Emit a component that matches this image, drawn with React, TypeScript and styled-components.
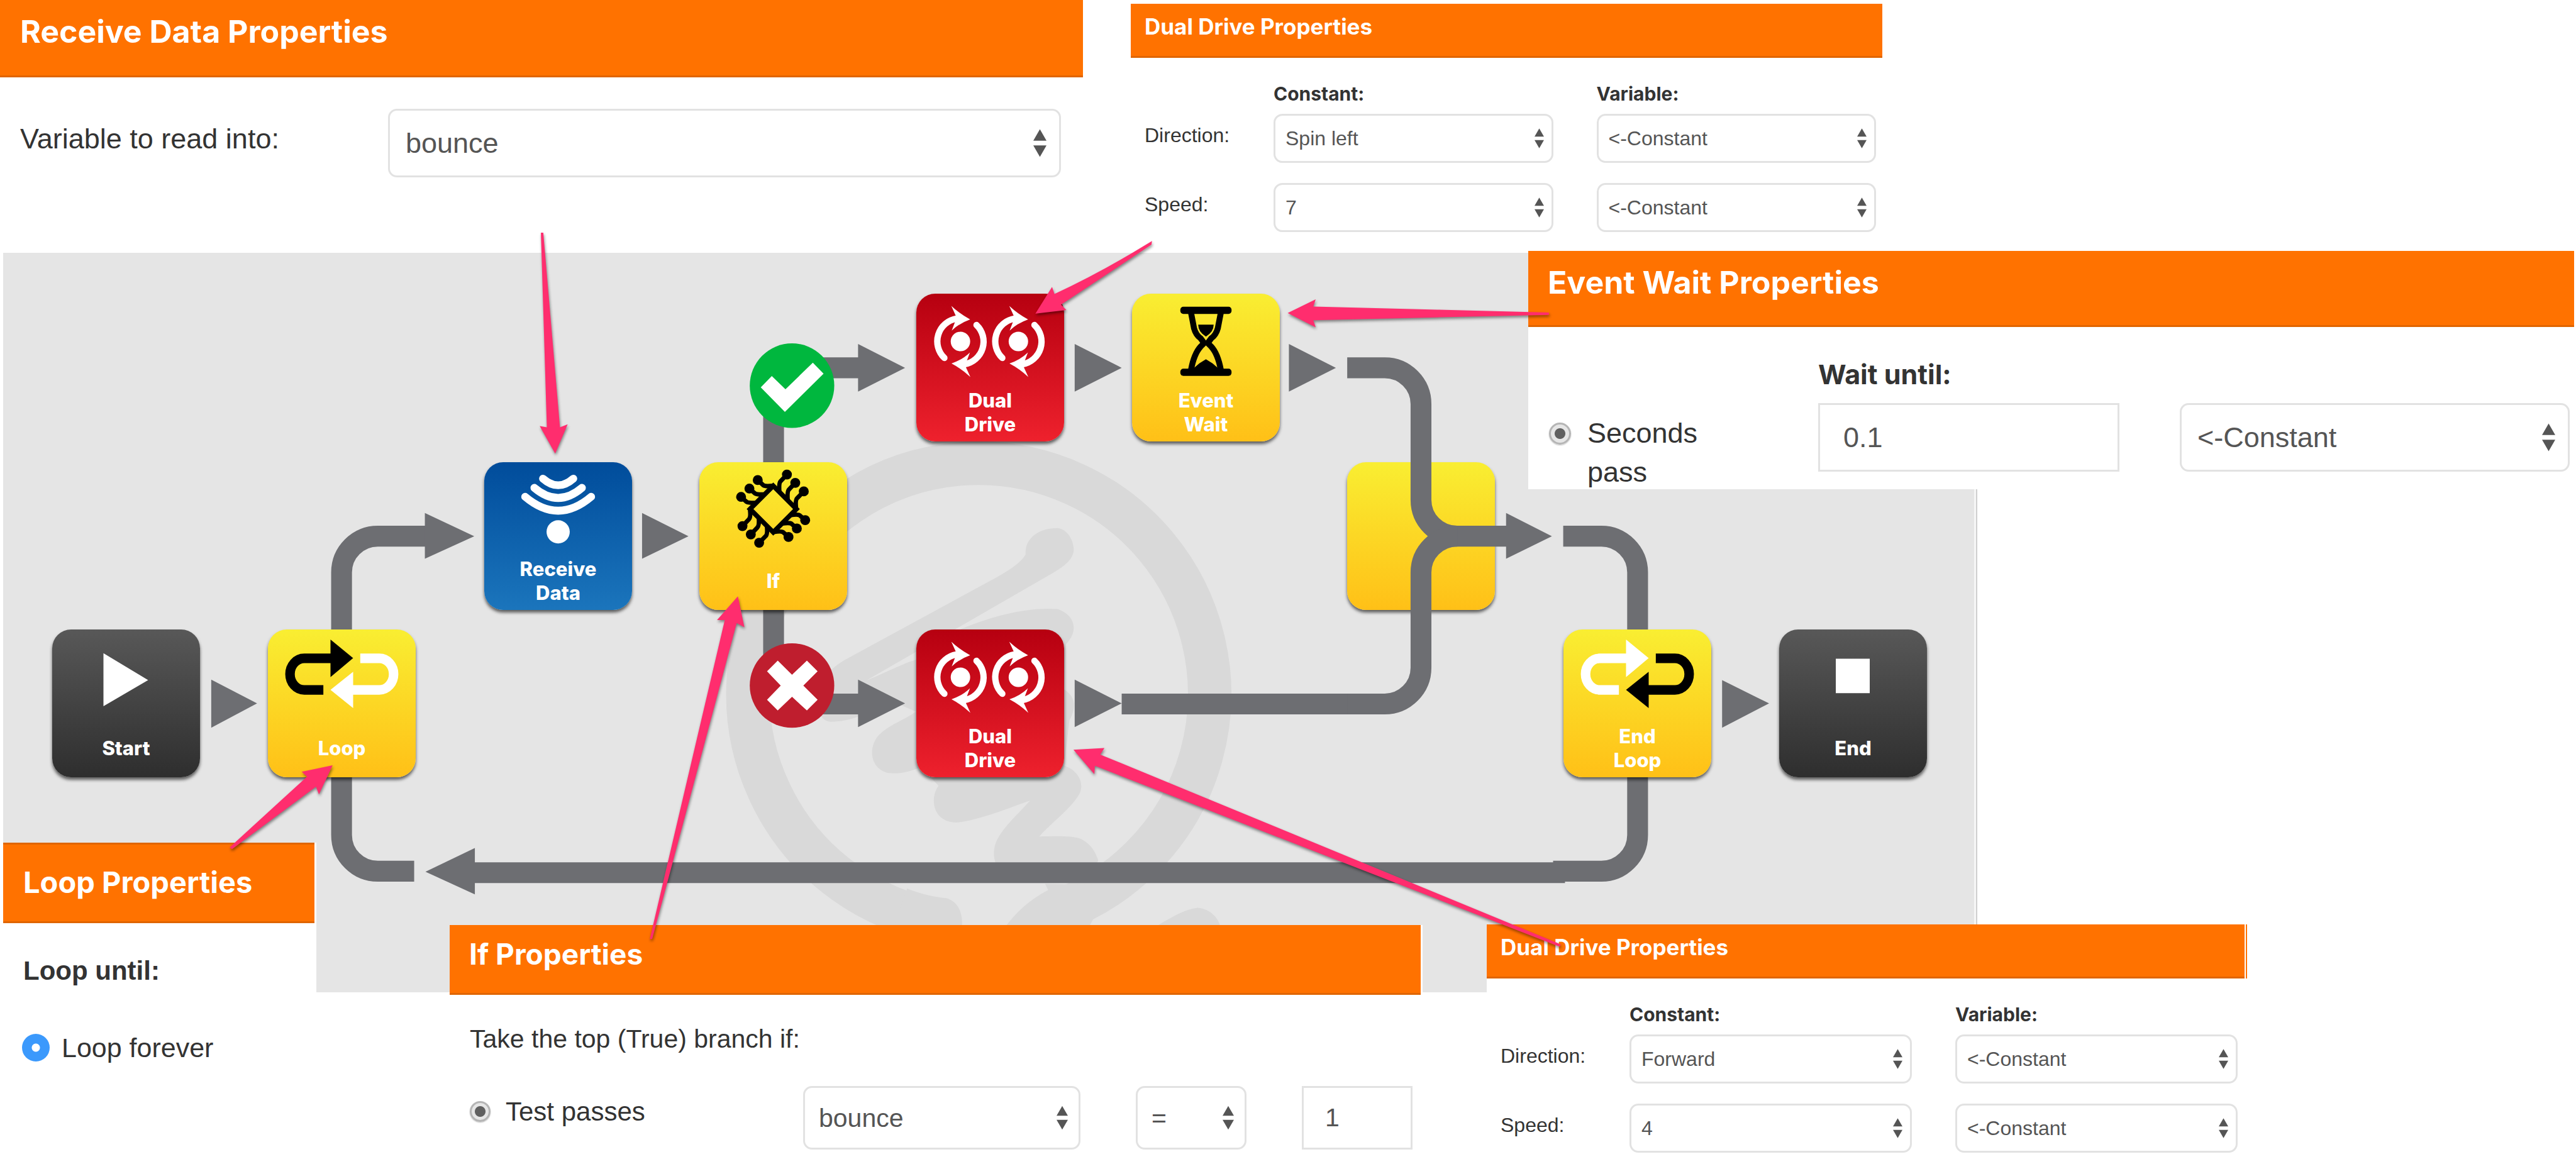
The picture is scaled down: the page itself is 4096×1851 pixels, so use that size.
import React, { useId } from "react";
import styled, { createGlobalStyle, css } from "styled-components";

const GlobalStyle = createGlobalStyle`
  *, *::before, *::after { box-sizing: border-box; }
  body {
    margin: 0;
    background: #fff;
    color: #333;
    font-family: "Liberation Sans", Arial, Helvetica, sans-serif;
  }
`;

const displayFont = `Inter, Roboto, "Liberation Sans", sans-serif`;
const orange = "#ff7200";
const orangeEdge = "#e06500";

/* ---------- board ---------- */

const Board = styled.main`
  position: relative;
  width: 100%;
  min-height: 100vh;
  overflow: hidden;
`;

const Canvas = styled.section`
  position: absolute;
  left: 5px;
  top: 402px;
  width: 3134px;
  height: 1176px;
  background: #e5e5e5;
  box-shadow: 3px 0 0 #f6f6f6, 5px 0 0 #cfcfcf;
`;

const Layer = styled.svg`
  position: absolute;
  left: 0;
  top: 0;
  width: 4096px;
  height: 1851px;
  pointer-events: none;
`;

/* ---------- flow chart tiles ---------- */

type Tone = "dark" | "yellow" | "blue" | "red";

const tones: Record<Tone, string> = {
  dark: "linear-gradient(#585858, #2e2e2e)",
  yellow: "linear-gradient(#f9ee32, #ffc017)",
  blue: "linear-gradient(#004c9b, #1b75bc)",
  red: "linear-gradient(#b60010, #ee212d)",
};

const Tile = styled.div<{ $x: number; $y: number; $tone: Tone }>`
  position: absolute;
  left: ${(p) => p.$x}px;
  top: ${(p) => p.$y}px;
  width: 235px;
  height: 235px;
  display: flex;
  flex-direction: column;
  border-radius: 30px;
  background: ${(p) => tones[p.$tone]};
  box-shadow: 0 4px 5px rgba(0, 0, 0, 0.6);
`;

const TileIcon = styled.svg`
  display: block;
  width: 235px;
  height: 142px;
`;

const TileLabel = styled.div`
  flex: 1;
  display: flex;
  align-items: center;
  justify-content: center;
  padding: 0 54px;
  color: #fff;
  font: 800 31px/38px ${displayFont};
  text-align: center;
`;

const PlayIcon = () => <path d="M86 40 161 85 86 129Z" fill="#fff" />;
const StopIcon = () => <path d="M95 49H152V107H95Z" fill="#fff" />;

const LoopIcon = ({ first, second }: { first: string; second: string }) => (
  <>
    <path d="M93 101.5H61A24 26.5 0 0 1 61 48.5H106" fill="none" stroke={first} strokeWidth="16" />
    <path d="M105 17 143 48 105 80Z" fill={first} />
    <path d="M155 48.5H187A24 26.5 0 0 1 187 101.5H142" fill="none" stroke={second} strokeWidth="16" />
    <path d="M105 101.5 143 71V132Z" fill={second} />
  </>
);

const SignalIcon = () => (
  <>
    <g fill="none" stroke="#fff" strokeWidth="13" strokeLinecap="round">
      <path d="M98.500 27.500Q124 50 149.500 27.500" />
      <path d="M84 43Q124 77 164 43" />
      <path d="M68.500 58Q124 105 179.500 58" />
    </g>
    <circle cx="124" cy="117" r="19.500" fill="#fff" />
  </>
);

const chipPads: [number, number][] = [
  [459, 83], [501, 125], [544, 168], [312, 111], [270, 154], [228, 196],
  [235, 343], [277, 385], [319, 427], [467, 398], [509, 355], [551, 313],
];

const ChipIcon = () => (
  <g transform="translate(-6 -7) scale(.3333)">
    <path d="M273 257 390 140 507 257 390 374Z" fill="none" stroke="#000" strokeWidth="24" />
    <path
      fill="none"
      stroke="#000"
      strokeWidth="22"
      strokeLinejoin="round"
      d="M459 83 426 118Q418 128 421 168M501 125 468 160Q460 170 463 212M544 168 510 203Q501 212 505 252
         M312 111 340 137Q350 144 388 140M270 154 298 178Q308 185 346 183M228 196 256 221Q266 227 304 226
         M235 343 268 308Q277 299 273 262M277 385 310 350Q320 340 317 302M319 427 353 392Q362 382 358 344
         M467 398 440 374Q430 367 392 373M509 355 482 331Q472 325 434 330M551 313 522 288Q512 283 476 288"
    />
    {chipPads.map(([x, y]) => (
      <circle key={`${x}-${y}`} cx={x} cy={y} r="25" />
    ))}
  </g>
);

const Wheel = ({ dx }: { dx: number }) => (
  <g transform={`translate(${dx} 0)`}>
    <circle cx="252" cy="283" r="49" fill="#fff" />
    <g fill="none" stroke="#fff" strokeWidth="32" strokeLinecap="round">
      <path d="M171 366A116 116 0 0 1 232 168" />
      <path d="M333 200A116 116 0 0 1 272 398" />
    </g>
    <path d="M206 104Q250 145 301 172 245 192 208 228L224 186 228 152Z" fill="#fff" />
    <path d="M302 462Q258 421 207 394 263 374 300 338L284 380 280 414Z" fill="#fff" />
  </g>
);

const DriveIcon = () => (
  <g transform="translate(-10 -14) scale(.3333)">
    <Wheel dx={0} />
    <Wheel dx={292} />
  </g>
);

const HourglassIcon = () => (
  <>
    <rect x="81" y="22" width="86" height="12" rx="5" />
    <rect x="81" y="126" width="86" height="12" rx="5" />
    <g fill="none" stroke="#000" strokeWidth="10">
      <path d="M99 32 104 58Q107 69 115 75L121 83 115 89Q104 101 99 128" />
      <path d="M149 32 144 58Q141 69 133 75L127 83 133 89Q144 101 149 128" />
    </g>
    <path d="M111 52H137Q137 64 124 72 111 64 111 52Z" />
    <path d="M100 128 113 117 124 110 135 117 148 128Z" />
  </>
);

type Step = { x: number; y: number; tone: Tone; label: string; icon?: React.ReactNode };

const steps: Step[] = [
  { x: 83, y: 1001, tone: "dark", label: "Start", icon: <PlayIcon /> },
  { x: 426, y: 1001, tone: "yellow", label: "Loop", icon: <LoopIcon first="#000" second="#fff" /> },
  { x: 770, y: 735, tone: "blue", label: "Receive Data", icon: <SignalIcon /> },
  { x: 1112, y: 735, tone: "yellow", label: "If", icon: <ChipIcon /> },
  { x: 1457, y: 467, tone: "red", label: "Dual Drive", icon: <DriveIcon /> },
  { x: 1457, y: 1001, tone: "red", label: "Dual Drive", icon: <DriveIcon /> },
  { x: 1800, y: 467, tone: "yellow", label: "Event Wait", icon: <HourglassIcon /> },
  { x: 2142, y: 735, tone: "yellow", label: "" },
  { x: 2486, y: 1001, tone: "yellow", label: "End Loop", icon: <LoopIcon first="#fff" second="#000" /> },
  { x: 2829, y: 1001, tone: "dark", label: "End", icon: <StopIcon /> },
];

const FlowStep = ({ x, y, tone, label, icon }: Step) => (
  <Tile $x={x} $y={y} $tone={tone}>
    {icon && <TileIcon viewBox="0 0 248 150" aria-hidden="true">{icon}</TileIcon>}
    {label && <TileLabel>{label}</TileLabel>}
  </Tile>
);

const grey = "#6d6e72";

const Watermark = () => (
  <g fill="#d9d9d9">
    <path
      d="M1580 1549A388 388 0 1 1 1772 1533"
      fill="none"
      stroke="#d9d9d9"
      strokeWidth="73"
    />
    <g transform="translate(1180 740) scale(.574 .523)">
      <path d="M600 1440C650 1462 690 1468 715 1471 750 1482 765 1520 760 1568H560Z" />
      <path d="M1004 1425 1013 1445C960 1475 915 1520 885 1568H1130L1200 1430Z" />
      <path d="M1320 1568C1370 1535 1410 1508 1450 1502 1490 1505 1515 1540 1518 1568Z" />
      <path
        d="M947 366C944 315 985 282 1040 282 1072 286 1088 325 1088 352 1086 392 1040 418 1000 443
           L480 772C560 735 590 715 640 700L760 605C860 560 960 535 1040 542 1090 560 1105 610 1065 655
           L1060 800C1095 825 1095 860 1075 900L1060 1045C1100 1060 1120 1100 1105 1135
           1080 1185 1020 1230 987 1273 1040 1272 1085 1270 1110 1281 1140 1300 1150 1320 1160 1350
           L1130 1400H900C850 1380 845 1320 865 1280 885 1240 925 1200 960 1158
           900 1180 810 1222 745 1228 675 1228 665 1150 692 1110L640 1050
           C600 1068 575 1072 545 1069 490 1055 485 985 518 946 550 912 590 900 626 872
           L560 840C480 880 430 905 375 904 330 900 330 820 370 750 385 725 410 710 430 698
           L820 465C880 430 930 400 947 366Z"
      />
    </g>
  </g>
);

const Connectors = () => (
  <>
    <g fill="none" stroke={grey} strokeWidth="35">
      <path d="M574 1070V962A61 61 0 0 1 635 901H716" />
      <path d="M574 1300V1403A61 61 0 0 0 635 1464H696" />
      <path d="M1300 790V679A61 61 0 0 1 1361 618H1444" />
      <path d="M1300 1010V1122A61 61 0 0 0 1361 1183H1444" />
      <path d="M1885 1183H2270" />
      <path d="M797 1466.500H2630" />
      <path d="M2610 1464H2691A61 61 0 0 0 2752 1403V1300" />
      <path d="M2627 901H2691A61 61 0 0 1 2752 962V1070" />
    </g>
    <g fill={grey}>
      <path d="M355 1142 432 1182 355 1223Z" />
      <path d="M714 862 797 901 714 939Z" />
      <path d="M1079 862 1157 901 1079 939Z" />
      <path d="M1442 578 1521 618 1442 658Z" />
      <path d="M1442 1142 1521 1182 1442 1222Z" />
      <path d="M1806 578 1885 618 1806 658Z" />
      <path d="M1806 1142 1885 1182 1806 1222Z" />
      <path d="M2166 578 2245 618 2166 658Z" />
      <path d="M2894 1143 2973 1182 2894 1223Z" />
      <path d="M715 1465 798 1425V1503Z" />
    </g>
  </>
);

const MergeConnector = () => (
  <>
    <g fill="none" stroke={grey} strokeWidth="35">
      <path d="M2264 618H2327A61 61 0 0 1 2388 679V840A61 61 0 0 0 2449 901H2532" />
      <path d="M2264 1183H2327A61 61 0 0 0 2388 1122V962A61 61 0 0 1 2449 901" />
    </g>
    <path d="M2531 862 2608 901 2531 939Z" fill={grey} />
  </>
);

const Badges = () => (
  <>
    <circle cx="1331" cy="648" r="71" fill="#00b73e" />
    <path d="M1278.500 651 1297 632 1320 654 1366 609.500 1384 628 1319 692Z" fill="#fff" />
    <circle cx="1331" cy="1152" r="71" fill="#bf1e2e" />
    <path
      d="M1307 1110 1331 1134 1356 1110 1374 1128 1350 1152 1374 1176 1356 1194 1331 1171 1307 1194 1289 1176 1312 1152 1289 1128Z"
      fill="#fff"
    />
  </>
);

const PointerGroup = styled.g`
  fill: #ff2d6e;
  filter: drop-shadow(1px 3px 2px rgba(0, 0, 0, 0.45));
`;

const Pointers = () => (
  <PointerGroup>
    <path d="M909 391 913 391 941 718 954 713 933 762 907 716 919 718Z" />
    <path d="M1936 405 1935 411 1783 512 1792 521 1740 527 1768 482 1772 494Q1850 458 1936 405Z" />
    <path d="M2603 525V529L2207 538 2211 550 2164 526 2211 503 2207 515Z" />
    <path d="M1092 1578 1096 1578 1238 1047 1251 1054 1240 1002 1205 1042 1218 1042Z" />
    <path d="M2621 1591 2623 1587 1849 1268 1856 1257 1804 1260 1839 1301 1840 1287Z" />
    <path d="M386 1424 390 1427 531 1322 536 1335 559 1286 507 1297 516 1305Z" />
  </PointerGroup>
);

/* ---------- property panels ---------- */

const Panel = styled.section<{ $x: number; $y: number; $w: number; $h: number }>`
  position: absolute;
  left: ${(p) => p.$x}px;
  top: ${(p) => p.$y}px;
  width: ${(p) => p.$w}px;
  height: ${(p) => p.$h}px;
  overflow: hidden;
  background: #fff;
`;

const PanelTitle = styled.h2<{
  $size: number;
  $height: number;
  $pad: number;
  $inset: number;
  $topEdge?: boolean;
  $sideEdge?: boolean;
}>`
  margin: 0 ${(p) => (p.$sideEdge ? 4 : 3)}px 0 0;
  height: ${(p) => p.$height}px;
  padding: ${(p) => p.$pad}px ${(p) => p.$inset}px 0;
  background: ${orange};
  border-bottom: 3px solid ${orangeEdge};
  color: #fff;
  font: 700 ${(p) => p.$size}px/60px ${displayFont};
  white-space: nowrap;
  ${(p) =>
    p.$topEdge &&
    css`
      box-shadow: inset 0 3px 0 ${orangeEdge};
    `}
  ${(p) =>
    p.$sideEdge &&
    css`
      box-shadow: 2px 0 0 #fff, 4px 0 0 ${orange};
    `}
`;

const fieldBox = css<{ $size: number; $pad: number }>`
  display: block;
  width: 100%;
  height: 100%;
  margin: 0;
  padding: 0 ${(p) => p.$pad}px;
  border: 3px solid #e2e2e2;
  background: #fff;
  color: #555;
  font: 400 ${(p) => p.$size}px "Liberation Sans", Arial, Helvetica, sans-serif;
  outline: none;
`;

const SelectWrap = styled.div<{ $height: number }>`
  position: relative;
  height: ${(p) => p.$height}px;
`;

const SelectBox = styled.select<{ $size: number; $pad: number }>`
  ${fieldBox}
  appearance: none;
  border-radius: 14px;
`;

const TextBox = styled.input<{ $size: number; $pad: number; $height: number }>`
  ${fieldBox}
  height: ${(p) => p.$height}px;
  border-radius: 0;
`;

const Carets = styled.svg<{ $w: number; $right: number }>`
  position: absolute;
  top: 0;
  bottom: 0;
  right: ${(p) => p.$right}px;
  width: ${(p) => p.$w}px;
  height: 100%;
  pointer-events: none;
`;

type Scale = "small" | "medium" | "large";
const scales = {
  small: { size: 32, height: 78, pad: 16, caret: 15, right: 15 },
  medium: { size: 41, height: 101, pad: 22, caret: 18, right: 20 },
  large: { size: 45, height: 109, pad: 25, caret: 21, right: 23 },
};

const Select = ({ value, scale, id, label }: { value: string; scale: Scale; id?: string; label?: string }) => {
  const s = scales[scale];
  return (
    <SelectWrap $height={s.height}>
      <SelectBox id={id} aria-label={label} defaultValue={value} $size={s.size} $pad={s.pad}>
        <option>{value}</option>
      </SelectBox>
      <Carets viewBox="0 0 22 46" $w={s.caret} $right={s.right} aria-hidden="true">
        <path d="M11 0 22 19H0ZM0 27H22L11 46Z" fill="#555" />
      </Carets>
    </SelectWrap>
  );
};

const FieldLabel = styled.label<{ $size: number; $lift: number }>`
  align-self: center;
  padding-bottom: ${(p) => p.$lift}px;
  font-size: ${(p) => p.$size}px;
  white-space: nowrap;
`;

const ColumnHead = styled.div<{ $size: number; $line: number }>`
  font: 700 ${(p) => p.$size}px/${(p) => p.$line}px ${displayFont};
`;

const Radio = styled.input<{ $size: number; $blue?: boolean }>`
  appearance: none;
  flex: none;
  width: ${(p) => p.$size}px;
  height: ${(p) => p.$size}px;
  margin: 0;
  border-radius: 50%;
  ${(p) =>
    p.$blue
      ? css`
          background: radial-gradient(circle, #fff 6px, #3b99fc 7px);
        `
      : css`
          border: 3px solid #b5b5b5;
          background: radial-gradient(circle, #606060 8px, #e6e6e6 9px);
          box-shadow: 0 1px 2px rgba(0, 0, 0, 0.25);
        `}
`;

const RadioRow = styled.label<{ $size: number; $line: number; $gap: number }>`
  display: flex;
  align-items: center;
  gap: ${(p) => p.$gap}px;
  font-size: ${(p) => p.$size}px;
  line-height: ${(p) => p.$line}px;
`;

const ReceiveBody = styled.div`
  display: grid;
  grid-template-columns: 585px 1fr;
  padding: 50px 38px 0 32px;
`;

const DriveBody = styled.div<{ $right: number }>`
  display: grid;
  grid-template-columns: 136px 1fr 1fr;
  column-gap: 69px;
  row-gap: 32px;
  padding: 37px ${(p) => p.$right}px 0 22px;
`;

const DriveHeads = styled.div`
  grid-column: 2 / -1;
  display: grid;
  grid-template-columns: 1fr 1fr;
  column-gap: 69px;
  margin-bottom: -20px;
`;

const EventBody = styled.div`
  display: grid;
  grid-template-columns: 332px 479px 1fr;
  column-gap: 96px;
  row-gap: 16px;
  padding: 45px 10px 0 33px;
`;

const EventHead = styled(ColumnHead)`
  grid-column: 2 / -1;
`;

const EventRadio = styled(RadioRow)`
  align-items: flex-start;
  padding-top: 17px;
  padding-right: 60px;

  input {
    margin-top: 14px;
  }
`;

const LoopBody = styled.div`
  display: flex;
  flex-direction: column;
  gap: 62px;
  padding: 46px 31px 0 30px;
`;

const LoopHead = styled.div`
  padding-left: 2px;
  font-size: 42px;
  font-weight: 700;
  line-height: 60px;
`;

const IfBody = styled.div`
  padding: 40px 16px 0 32px;
`;

const IfText = styled.p`
  margin: 0 0 45px;
  font-size: 41px;
  line-height: 60px;
`;

const IfRow = styled.div`
  display: grid;
  grid-template-columns: 442px 441px 1fr 1fr;
  column-gap: 88px;
`;

const IfRadio = styled(RadioRow)`
  padding-bottom: 20px;
`;

const DrivePanel = ({
  x, y, w, h, right, edge, direction, speed,
}: {
  x: number; y: number; w: number; h: number; right: number; edge?: boolean; direction: string; speed: string;
}) => {
  const id = useId();
  return (
    <Panel $x={x} $y={y} $w={w} $h={h}>
      <PanelTitle $size={35} $height={86} $pad={6} $inset={22} $sideEdge={edge}>
        Dual Drive Properties
      </PanelTitle>
      <DriveBody $right={right}>
        <DriveHeads>
          <ColumnHead $size={30} $line={40}>Constant:</ColumnHead>
          <ColumnHead $size={30} $line={40}>Variable:</ColumnHead>
        </DriveHeads>
        <FieldLabel htmlFor={`${id}d`} $size={32} $lift={9}>Direction:</FieldLabel>
        <Select scale="small" id={`${id}d`} value={direction} />
        <Select scale="small" label="Direction variable" value="<-Constant" />
        <FieldLabel htmlFor={`${id}s`} $size={32} $lift={9}>Speed:</FieldLabel>
        <Select scale="small" id={`${id}s`} value={speed} />
        <Select scale="small" label="Speed variable" value="<-Constant" />
      </DriveBody>
    </Panel>
  );
};

export default function App() {
  return (
    <>
      <GlobalStyle />
      <Board>
        <Canvas aria-label="Flow chart" />
        <Layer viewBox="0 0 4329 1956" aria-hidden="true">
          <Watermark />
          <Connectors />
        </Layer>
        {steps.map((s) => (
          <FlowStep key={`${s.x}-${s.y}`} {...s} />
        ))}
        <Layer viewBox="0 0 4329 1956" aria-hidden="true">
          <MergeConnector />
          <Badges />
        </Layer>

        <Panel $x={0} $y={0} $w={1725} $h={400}>
          <PanelTitle $size={50} $height={123} $pad={20} $inset={32}>Receive Data Properties</PanelTitle>
          <ReceiveBody>
            <FieldLabel htmlFor="receive-into" $size={45} $lift={13}>Variable to read into:</FieldLabel>
            <Select scale="large" id="receive-into" value="bounce" />
          </ReceiveBody>
        </Panel>

        <DrivePanel x={1798} y={6} w={1198} h={390} right={13} direction="Spin left" speed="7" />

        <Panel $x={2430} $y={399} $w={1666} $h={379}>
          <PanelTitle $size={50} $height={121} $pad={20} $inset={31}>Event Wait Properties</PanelTitle>
          <EventBody>
            <EventHead as="label" htmlFor="wait-seconds" $size={43} $line={60}>Wait until:</EventHead>
            <EventRadio $size={45} $line={62} $gap={26}>
              <Radio type="radio" name="wait" defaultChecked $size={35} />
              <span>Seconds pass</span>
            </EventRadio>
            <TextBox id="wait-seconds" defaultValue="0.1" $size={45} $pad={37} $height={109} />
            <Select scale="large" label="Seconds variable" value="<-Constant" />
          </EventBody>
        </Panel>

        <Panel $x={5} $y={1340} $w={498} $h={511}>
          <PanelTitle $size={47} $height={128} $pad={33} $inset={32} $topEdge>Loop Properties</PanelTitle>
          <LoopBody>
            <LoopHead>Loop until:</LoopHead>
            <RadioRow $size={43} $line={60} $gap={19}>
              <Radio type="radio" name="loop" defaultChecked $size={44} $blue />
              Loop forever
            </RadioRow>
          </LoopBody>
        </Panel>

        <Panel $x={715} $y={1471} $w={1547} $h={380}>
          <PanelTitle $size={46} $height={111} $pad={16} $inset={31}>If Properties</PanelTitle>
          <IfBody>
            <IfText>Take the top (True) branch if:</IfText>
            <IfRow>
              <IfRadio $size={42} $line={60} $gap={24}>
                <Radio type="radio" name="if" defaultChecked $size={33} />
                Test passes
              </IfRadio>
              <Select scale="medium" label="Variable" value="bounce" />
              <Select scale="medium" label="Comparison" value="=" />
              <TextBox aria-label="Value" defaultValue="1" $size={41} $pad={34} $height={101} />
            </IfRow>
          </IfBody>
        </Panel>

        <DrivePanel x={2364} y={1470} w={1209} h={381} right={15} edge direction="Forward" speed="4" />

        <Layer viewBox="0 0 4329 1956" aria-hidden="true">
          <Pointers />
        </Layer>
      </Board>
    </>
  );
}
